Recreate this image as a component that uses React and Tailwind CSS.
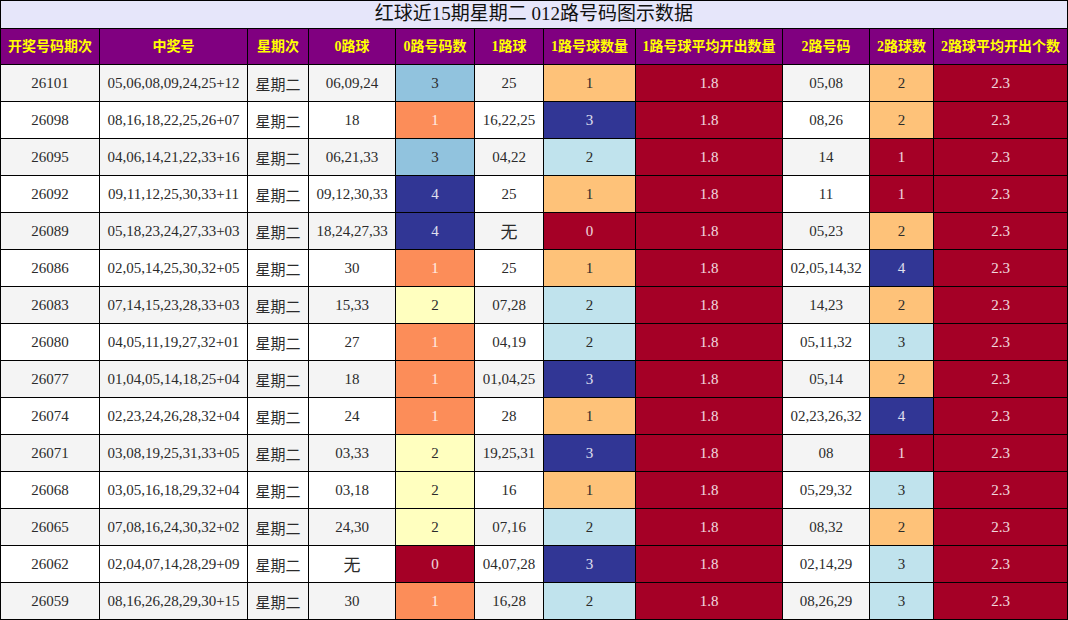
const C = {
    dr: 'bg-[#a50026] text-white/85',
    or: 'bg-[#fc8d59] text-white/85',
    py: 'bg-[#ffffbf] text-[#2b2b2b]',
    lb: 'bg-[#91c3de] text-[#2b2b2b]',
    db: 'bg-[#313695] text-white/85',
    lo: 'bg-[#fec279] text-[#2b2b2b]',
    lc: 'bg-[#c0e3ed] text-[#2b2b2b]',
};

const HEADERS = [
    '开奖号码期次', '中奖号', '星期次', '0路球', '0路号码数', '1路球',
    '1路号球数量', '1路号球平均开出数量', '2路号码', '2路球数', '2路球平均开出个数',
];

// [期次, 中奖号, 0路球, 0路数, 0色, 1路球, 1路数, 1色, 2路号码, 2路数, 2色]
const ROWS = [
    ['26101', '05,06,08,09,24,25+12', '06,09,24', 3, 'lb', '25', 1, 'lo', '05,08', 2, 'lo'],
    ['26098', '08,16,18,22,25,26+07', '18', 1, 'or', '16,22,25', 3, 'db', '08,26', 2, 'lo'],
    ['26095', '04,06,14,21,22,33+16', '06,21,33', 3, 'lb', '04,22', 2, 'lc', '14', 1, 'dr'],
    ['26092', '09,11,12,25,30,33+11', '09,12,30,33', 4, 'db', '25', 1, 'lo', '11', 1, 'dr'],
    ['26089', '05,18,23,24,27,33+03', '18,24,27,33', 4, 'db', '无', 0, 'dr', '05,23', 2, 'lo'],
    ['26086', '02,05,14,25,30,32+05', '30', 1, 'or', '25', 1, 'lo', '02,05,14,32', 4, 'db'],
    ['26083', '07,14,15,23,28,33+03', '15,33', 2, 'py', '07,28', 2, 'lc', '14,23', 2, 'lo'],
    ['26080', '04,05,11,19,27,32+01', '27', 1, 'or', '04,19', 2, 'lc', '05,11,32', 3, 'lc'],
    ['26077', '01,04,05,14,18,25+04', '18', 1, 'or', '01,04,25', 3, 'db', '05,14', 2, 'lo'],
    ['26074', '02,23,24,26,28,32+04', '24', 1, 'or', '28', 1, 'lo', '02,23,26,32', 4, 'db'],
    ['26071', '03,08,19,25,31,33+05', '03,33', 2, 'py', '19,25,31', 3, 'db', '08', 1, 'dr'],
    ['26068', '03,05,16,18,29,32+04', '03,18', 2, 'py', '16', 1, 'lo', '05,29,32', 3, 'lc'],
    ['26065', '07,08,16,24,30,32+02', '24,30', 2, 'py', '07,16', 2, 'lc', '08,32', 2, 'lo'],
    ['26062', '02,04,07,14,28,29+09', '无', 0, 'dr', '04,07,28', 3, 'db', '02,14,29', 3, 'lc'],
    ['26059', '08,16,26,28,29,30+15', '30', 1, 'or', '16,28', 2, 'lc', '08,26,29', 3, 'lc'],
];

function Cell({ className = '', children }) {
    const isWu = children === '无';
    return (
        <div className={`h-9 flex items-center justify-center whitespace-nowrap ${isWu ? 'text-[17px] pt-1' : 'text-[15px]'} ${className}`}>
            {children}
        </div>
    );
}

export default function App() {
    return (
        <div
            className="w-[1068px] h-[620px] bg-black p-px grid gap-px grid-cols-[98px_147px_60px_86px_78px_68px_91px_146px_86px_63px_133px] content-start"
            style={{ fontFamily: '"Liberation Serif", "Noto Sans CJK SC", serif' }}
        >
            <div className="col-span-full h-[27px] bg-[#e6e6fa] flex items-center justify-center text-[19px] text-[#111]">
                红球近15期星期二 012路号码图示数据
            </div>

            {HEADERS.map(h => (
                <div key={h} className="h-[35px] bg-[#800080] text-[#ffff00] font-bold text-[14px] flex items-center justify-center whitespace-nowrap">
                    {h}
                </div>
            ))}

            {ROWS.map((r, i) => {
                const base = i % 2 === 0 ? 'bg-[#f4f4f4] text-[#2b2b2b]' : 'bg-white text-[#2b2b2b]';
                return [
                    <Cell key={`${i}a`} className={base}>{r[0]}</Cell>,
                    <Cell key={`${i}b`} className={base}>{r[1]}</Cell>,
                    <Cell key={`${i}c`} className={`${base} pt-1`}><span className="text-[15px]">星期二</span></Cell>,
                    <Cell key={`${i}d`} className={base}>{r[2]}</Cell>,
                    <Cell key={`${i}e`} className={C[r[4]]}>{r[3]}</Cell>,
                    <Cell key={`${i}f`} className={base}>{r[5]}</Cell>,
                    <Cell key={`${i}g`} className={C[r[7]]}>{r[6]}</Cell>,
                    <Cell key={`${i}h`} className={C.dr}>1.8</Cell>,
                    <Cell key={`${i}i`} className={base}>{r[8]}</Cell>,
                    <Cell key={`${i}j`} className={C[r[10]]}>{r[9]}</Cell>,
                    <Cell key={`${i}k`} className={C.dr}>2.3</Cell>,
                ];
            })}
        </div>
    );
}
